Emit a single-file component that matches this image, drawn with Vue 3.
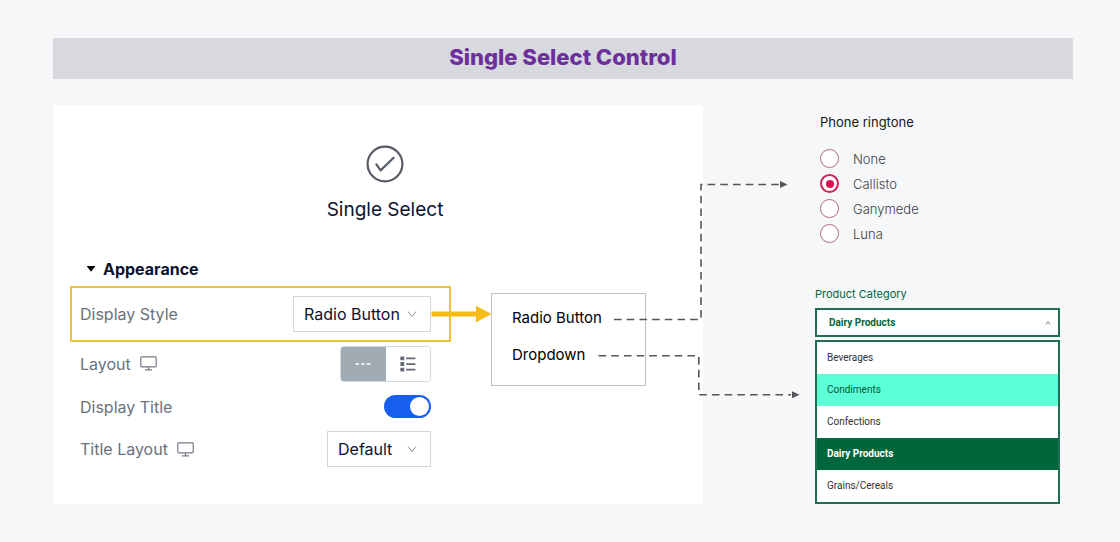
<script setup>
import { ref } from 'vue'

const displayStyle = ref('Radio Button')
const titleLayout = ref('Default')
const layout = ref('inline')
const showTitle = ref(true)

const ringtones = ['None', 'Callisto', 'Ganymede', 'Luna']
const ringtone = ref('Callisto')

const categories = ['Beverages', 'Condiments', 'Confections', 'Dairy Products', 'Grains/Cereals']
const category = ref('Dairy Products')
const hovered = ref('Condiments')
</script>

<template>
  <div class="page">
    <header class="banner">
      <h1>Single Select Control</h1>
    </header>

    <main class="board">
      <section class="panel">
        <div class="settings">
          <div class="hero">
            <svg class="hero-icon" viewBox="0 0 38 38" aria-hidden="true">
              <circle cx="19" cy="19" r="17.4" />
              <path d="M10.4 19.4 14.6 25.4 27.6 12.8" />
            </svg>
            <h2>Single Select</h2>
          </div>

          <h3>
            <svg viewBox="0 0 10 8" aria-hidden="true"><path d="M0.6 1H9.4L5 6.8Z" /></svg>
            Appearance
          </h3>

          <div class="row highlight">
            <label for="display-style">Display Style</label>
            <span class="select wide">
              <select id="display-style" v-model="displayStyle">
                <option>Radio Button</option>
                <option>Dropdown</option>
              </select>
              <svg viewBox="0 0 10 8" aria-hidden="true"><path d="M1 1.5 5 6.5 9 1.5" /></svg>
            </span>
          </div>

          <div class="row layout-row">
            <span id="layout-label" class="name">
              Layout
              <svg class="monitor" viewBox="0 0 17 15" aria-hidden="true">
                <rect x="0.8" y="0.8" width="15.4" height="10" rx="0.8" />
                <path d="M8.5 11V13.6M5 13.8H12" />
              </svg>
            </span>
            <div class="segments" role="group" aria-labelledby="layout-label">
              <button type="button" :class="{ on: layout === 'inline' }" aria-label="Inline" @click="layout = 'inline'">
                <svg viewBox="0 0 16 4" width="16" height="4" aria-hidden="true">
                  <path d="M0.5 1h3.4v2H0.5zM6.2 1h3.4v2H6.2zM11.9 1h3.4v2h-3.4z" />
                </svg>
              </button>
              <button type="button" :class="{ on: layout === 'list' }" aria-label="List" @click="layout = 'list'">
                <svg viewBox="0 0 16 16" width="16" height="16" aria-hidden="true">
                  <path d="M0.4 0.5h3.8v3.8H0.4zM0.4 6.1h3.8v3.8H0.4zM0.4 11.7h3.8v3.8H0.4zM6.2 1.6h9.2v1.7H6.2zM6.2 7.2h9.2v1.7H6.2zM6.2 12.8h9.2v1.7H6.2z" />
                </svg>
              </button>
            </div>
          </div>

          <div class="row title-row">
            <label for="display-title">Display Title</label>
            <input id="display-title" v-model="showTitle" class="toggle" type="checkbox" role="switch">
          </div>

          <div class="row">
            <label class="name" for="title-layout">
              Title Layout
              <svg class="monitor" viewBox="0 0 17 15" aria-hidden="true">
                <rect x="0.8" y="0.8" width="15.4" height="10" rx="0.8" />
                <path d="M8.5 11V13.6M5 13.8H12" />
              </svg>
            </label>
            <span class="select">
              <select id="title-layout" v-model="titleLayout">
                <option>Default</option>
                <option>Top</option>
              </select>
              <svg viewBox="0 0 10 8" aria-hidden="true"><path d="M1 1.5 5 6.5 9 1.5" /></svg>
            </span>
          </div>
        </div>

        <div class="menu">
          <button type="button" @click="displayStyle = 'Radio Button'">Radio Button</button>
          <button type="button" @click="displayStyle = 'Dropdown'">Dropdown</button>
        </div>

        <svg class="connectors" viewBox="431 105 380 399" aria-hidden="true">
          <path class="pointer" d="M431.5 311.4H476V305.8L491.5 314L476 322.2V316.6H431.5Z" />
          <path class="dash" d="M614 319.5H701V184.5H779" />
          <path class="tip" d="M780 181L787.5 184.5L780 188Z" />
          <path class="dash" d="M598.5 355.8H698.8V394.8H791" />
          <path class="tip" d="M792 391.3L799.5 394.8L792 398.3Z" />
        </svg>
      </section>

      <aside class="examples">
        <fieldset class="ringtone">
          <legend>Phone ringtone</legend>
          <label v-for="tone in ringtones" :key="tone">
            <input v-model="ringtone" type="radio" name="ringtone" :value="tone">
            {{ tone }}
          </label>
        </fieldset>

        <div class="category">
          <span id="category-label" class="caption">Product Category</span>
          <button class="combo" type="button" aria-haspopup="listbox" aria-expanded="true" aria-describedby="category-label">
            {{ category }}
            <svg viewBox="0 0 6 6" aria-hidden="true"><path d="M0.8 4.6 3 1.6 5.2 4.6" /></svg>
          </button>
          <ul role="listbox" aria-labelledby="category-label">
            <li
              v-for="item in categories"
              :key="item"
              role="option"
              :aria-selected="item === category"
              :class="{ selected: item === category, hovered: item === hovered }"
              @mouseenter="hovered = item"
              @click="category = item"
            >
              {{ item }}
            </li>
          </ul>
        </div>
      </aside>
    </main>
  </div>
</template>

<style>
body {
  background: #f5f7f9;
}
</style>

<style scoped>
* {
  box-sizing: border-box;
}

.page {
  padding: 38px 47px 38px 53px;
  font-family: Inter, "Open Sans", sans-serif;
  color: #0b1230;
}

button,
select {
  font: inherit;
  color: inherit;
  margin: 0;
  cursor: pointer;
}

h1,
h2,
h3 {
  margin: 0;
}

.banner {
  background: #d8d9df;
  text-align: center;
}

h1 {
  font-size: 22px;
  line-height: 38px;
  padding-bottom: 3px;
  font-weight: 800;
  color: #6d2f9c;
}

.board {
  display: grid;
  grid-template-columns: 650fr 245fr;
  column-gap: 112px;
  padding-right: 13px;
  margin-top: 26px;
}

.panel {
  position: relative;
  background: #fff;
  padding-bottom: 37px;
}

.settings {
  margin: 0 252px 0 17px;
}

.hero {
  display: flex;
  flex-direction: column;
  align-items: center;
  padding-top: 40px;
  margin-right: -249px;
}

.hero-icon {
  width: 38px;
  height: 38px;
  fill: none;
  stroke: #565d66;
  stroke-width: 2.2;
  stroke-linecap: round;
  stroke-linejoin: round;
}

h2 {
  margin-top: 13px;
  font-size: 19px;
  line-height: 28px;
  font-weight: 400;
}

h3 {
  display: flex;
  align-items: center;
  gap: 7px;
  margin: 33px 0 5px 16px;
  font-size: 16px;
  line-height: 24px;
  font-weight: 700;
}

h3 svg {
  width: 10px;
  height: 8px;
}

.row {
  display: flex;
  align-items: center;
  justify-content: space-between;
  padding: 0 20px 0 10px;
  font-size: 16px;
  color: #69727d;
}

.highlight {
  height: 56px;
  padding: 0 18px 0 8px;
  border: 2px solid #ecc23a;
}

.layout-row {
  height: 43px;
}

.title-row {
  height: 43px;
  margin-bottom: 3px;
}

.name {
  display: flex;
  align-items: center;
  gap: 9px;
}

.monitor {
  width: 17px;
  height: 15px;
  fill: none;
  stroke: #747c87;
  stroke-width: 1.2;
}

.select {
  position: relative;
  width: 104px;
  height: 36px;
}

.select.wide {
  width: 138px;
}

.select select {
  width: 100%;
  height: 100%;
  padding: 0 10px;
  border: 1px solid #d2d5da;
  border-radius: 0;
  background: #fff;
  color: #0b1230;
  appearance: none;
}

.select svg {
  position: absolute;
  right: 14px;
  top: 14px;
  width: 10px;
  height: 8px;
  fill: none;
  stroke: #878e97;
  pointer-events: none;
}

.segments {
  display: flex;
  width: 91px;
  height: 36px;
  border: 1px solid #d2d7dd;
  border-radius: 4px;
  overflow: hidden;
}

.segments button {
  display: flex;
  flex: 1;
  align-items: center;
  justify-content: center;
  padding: 0;
  border: 0;
  background: #fff;
}

.segments svg {
  fill: #626a74;
}

.segments .on {
  background: #a1abb4;
}

.segments .on svg {
  fill: #e9edf0;
}

.toggle {
  appearance: none;
  display: flex;
  align-items: center;
  width: 47px;
  height: 23px;
  margin: 0;
  padding: 0 2px;
  border-radius: 12px;
  background: #a1abb4;
}

.toggle::before {
  content: "";
  width: 19px;
  height: 19px;
  border-radius: 50%;
  background: #fff;
}

.toggle:checked {
  justify-content: flex-end;
  background: #155eef;
}

.menu {
  position: absolute;
  top: 188px;
  right: 57px;
  display: flex;
  flex-direction: column;
  align-items: flex-start;
  gap: 13px;
  width: 155px;
  height: 93px;
  padding: 12px 20px;
  border: 1px solid #c1c1c3;
  background: #fff;
}

.menu button {
  padding: 0;
  border: 0;
  background: none;
  font-size: 15px;
  line-height: 24px;
  color: #000;
}

.connectors {
  position: absolute;
  top: 0;
  right: -108px;
  width: 380px;
  height: 399px;
  pointer-events: none;
}

.pointer {
  fill: #f5bb16;
}

.dash {
  fill: none;
  stroke: #55565a;
  stroke-width: 1.6;
  stroke-dasharray: 7.6 5.1;
}

.tip {
  fill: #55565a;
}

.ringtone {
  display: flex;
  flex-direction: column;
  margin: 0;
  padding: 0 0 0 5px;
  border: 0;
  font-size: 13px;
  font-weight: 300;
  color: #3f4044;
}

legend {
  margin-bottom: 14px;
  padding: 7px 0 0;
  line-height: 20px;
  font-weight: 400;
  color: #17181c;
}

.ringtone label {
  display: flex;
  align-items: center;
  gap: 14px;
  height: 25px;
}

.ringtone input {
  appearance: none;
  display: grid;
  place-items: center;
  width: 19px;
  height: 19px;
  margin: 0;
  border: 1px solid #b26a83;
  border-radius: 50%;
  background: #fff;
}

.ringtone input:checked {
  border: 2px solid #cf2258;
}

.ringtone input:checked::before {
  content: "";
  width: 8px;
  height: 8px;
  border-radius: 50%;
  background: #d6124f;
}

.category {
  margin-top: 40px;
  color: #00663c;
  font-family: Roboto, sans-serif;
  font-size: 10px;
}

.caption {
  display: block;
  margin-bottom: 6px;
  font-family: Inter, sans-serif;
  font-size: 11px;
  line-height: 16px;
}

.combo {
  display: flex;
  align-items: center;
  justify-content: space-between;
  width: 100%;
  height: 29px;
  padding: 0 7px 0 12px;
  border: 2px solid #1f6e4e;
  background: #fff;
  font-weight: 700;
}

.combo svg {
  width: 6px;
  height: 6px;
  fill: none;
  stroke: #77808a;
}

ul {
  margin: 3px 0 0;
  padding: 0;
  border: 2px solid #1f6e4e;
  background: #fff;
  list-style: none;
  color: #303236;
}

li {
  padding: 0 10px;
  line-height: 32px;
}

li.hovered {
  background: #5dffd6;
  color: #08553a;
}

li.selected {
  background: #00663c;
  color: #fff;
  font-weight: 700;
}
</style>
